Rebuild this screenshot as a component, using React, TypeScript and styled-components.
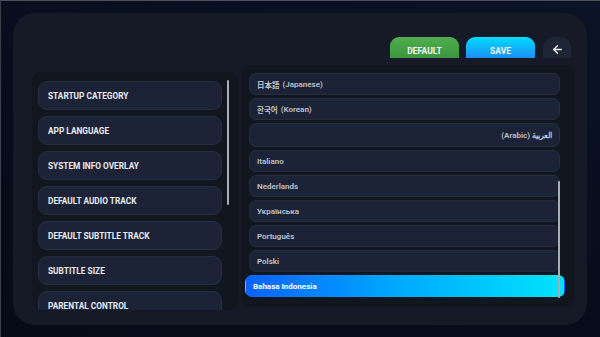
import styled, { createGlobalStyle } from "styled-components";
import { ArrowLeft } from "lucide-react";

const categories = [
  "Startup Category",
  "App Language",
  "System Info Overlay",
  "Default Audio Track",
  "Default Subtitle Track",
  "Subtitle Size",
  "Parental Control",
];

interface Language {
  native?: string;
  label: string;
  rtl?: boolean;
}

const languages: Language[] = [
  { native: "日本語", label: "(Japanese)" },
  { native: "한국어", label: "(Korean)" },
  { label: "العربية (Arabic)", rtl: true },
  { label: "Italiano" },
  { label: "Nederlands" },
  { label: "Українська" },
  { label: "Português" },
  { label: "Polski" },
  { label: "Bahasa Indonesia" },
];

const selected = "Bahasa Indonesia";

export default function App() {
  return <>
    <GlobalStyle />
    <Screen>
      <Panel>
        <Header>
          <ActionButton variant="default">Default</ActionButton>
          <ActionButton variant="save">Save</ActionButton>
          <BackButton><ArrowLeft size={13} strokeWidth={2.4} /></BackButton>
        </Header>
        <Columns>
          <CategoryList>
            {categories.map(c => <Category key={c}>{c}</Category>)}
            <Scrollbar top={8} height={125} right={9} />
          </CategoryList>
          <LanguageList>
            {languages.map(l =>
              <LanguageItem key={l.label} active={l.label === selected} rtl={l.rtl}>
                {l.native && <Native>{l.native}</Native>}
                {l.label}
              </LanguageItem>
            )}
            <Scrollbar top={116} height={117} right={15} />
          </LanguageList>
        </Columns>
      </Panel>
    </Screen>
  </>;
}

const GlobalStyle = createGlobalStyle`
  * { box-sizing: border-box; }
  html, body {
    margin: 0;
    padding: 0;
    background: #080d1b;
  }
  body {
    font-family: Roboto, "Noto Sans", "Noto Sans CJK KR", "Noto Sans CJK JP", sans-serif;
  }
`;

const Screen = styled.div`
  width: 600px;
  height: 337px;
  padding: 13px 13px 11px 13px;
  background: linear-gradient(200deg, #0b1326 0%, #070c1a 60%, #060b18 100%);
  border-top: 1px solid #4a4f5a;
  border-left: 1px solid #3a3f4a;
  overflow: hidden;
`;

const Panel = styled.div`
  width: 574px;
  height: 312px;
  margin-top: -1px;
  margin-left: -1px;
  border-radius: 22px;
  background: #151a26;
  padding: 24px 12px 18px 19px;
  display: flex;
  flex-direction: column;
`;

const Header = styled.div`
  display: flex;
  justify-content: flex-end;
  align-items: flex-start;
  gap: 7px;
  padding-right: 4px;
  height: 28px;
`;

const ActionButton = styled.div<{ variant: "default" | "save" }>`
  width: 69px;
  height: 21px;
  border-radius: 9px 9px 0 0;
  background: ${p => p.variant === "default"
    ? "linear-gradient(180deg, #4fae4f 0%, #3b963e 100%)"
    : "linear-gradient(180deg, #00dcff 0%, #1e8ef5 100%)"};
  color: #f4f7fb;
  font-size: 8.5px;
  font-weight: 700;
  text-transform: uppercase;
  display: flex;
  justify-content: center;
  align-items: flex-end;
  padding-bottom: 2px;
`;

const BackButton = styled.div`
  width: 28px;
  height: 21px;
  margin-left: 1px;
  border-radius: 10px 10px 0 0;
  background: #1e2535;
  color: #f2f4f8;
  display: flex;
  justify-content: center;
  align-items: center;
  padding-top: 3px;
`;

const Columns = styled.div`
  flex: 1;
  display: flex;
  gap: 3px;
  min-height: 0;
`;

const CategoryList = styled.div`
  position: relative;
  width: 206px;
  margin-top: 7px;
  height: 238px;
  border-radius: 10px;
  background: #11161f;
  padding: 9px 0 0 6px;
  display: flex;
  flex-direction: column;
  gap: 6px;
  overflow: hidden;
`;

const Category = styled.div`
  flex-shrink: 0;
  width: 184px;
  height: 29px;
  border-radius: 9px;
  background: #1c2336;
  border: 1px solid #262e42;
  color: #e9ecf2;
  font-size: 8.3px;
  font-weight: 700;
  text-transform: uppercase;
  display: flex;
  align-items: center;
  padding-left: 9px;
`;

const LanguageList = styled.div`
  position: relative;
  width: 334px;
  height: 242px;
  border-radius: 10px;
  background: #11161f;
  padding: 8px 0 0 4px;
  display: flex;
  flex-direction: column;
  gap: 3px;
`;

const LanguageItem = styled.div<{ active?: boolean; rtl?: boolean }>`
  flex-shrink: 0;
  height: ${p => p.rtl ? 24 : 22}px;
  width: ${p => p.active ? 320 : 311}px;
  margin-left: ${p => p.active ? 0 : 4}px;
  border-radius: 7px;
  background: ${p => p.active
    ? "linear-gradient(90deg, #0a62ff 0%, #00a6ff 45%, #00e4ff 100%)"
    : "#1c2336"};
  border: 1px solid ${p => p.active ? "transparent" : "#262e42"};
  color: ${p => p.active ? "#ffffff" : "#bfc4cd"};
  font-size: 8px;
  font-weight: ${p => p.active ? 700 : 600};
  direction: ${p => p.rtl ? "rtl" : "ltr"};
  display: flex;
  align-items: center;
  gap: 3px;
  padding: 0 7px;
`;

const Native = styled.span`
  font-size: 7.5px;
`;

const Scrollbar = styled.div<{ top: number; height: number; right: number }>`
  position: absolute;
  top: ${p => p.top}px;
  right: ${p => p.right}px;
  width: 2px;
  height: ${p => p.height}px;
  border-radius: 1px;
  background: #a9adb5;
`;
